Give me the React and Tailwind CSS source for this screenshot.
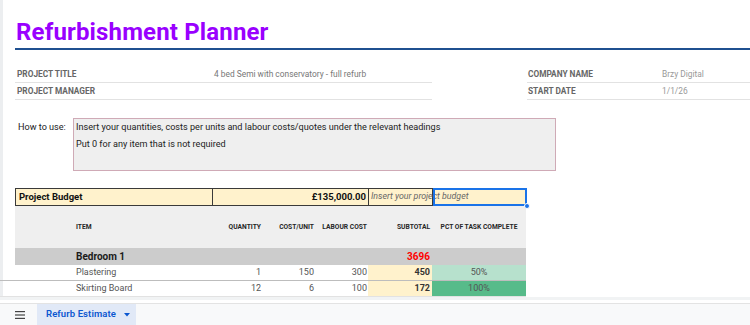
import React from "react";

const COLS = {
  A: "w-[58px]",
  B: "w-[139px]",
  C: "w-[51px]",
  D: "w-[53px]",
  E: "w-[52px]",
  F: "w-[64px]",
  G: "w-[94px]",
};

function InfoRows() {
  const left = [
    ["PROJECT TITLE", "4 bed Semi with conservatory - full refurb"],
    ["PROJECT MANAGER", ""],
  ];
  const right = [
    ["COMPANY NAME", "Brzy Digital"],
    ["START DATE", "1/1/26"],
  ];
  return (
    <div className="flex flex-col mt-[16px]">
      {left.map((l, i) => (
        <div key={i} className="flex h-[17px]">
          <div className="ml-[15px] w-[417px] flex items-center border-b border-[#e2e2e2] pt-[1px]">
            <div className="w-[199px] pl-[2px] text-[8.3px] font-bold text-[#666]">{l[0]}</div>
            <div className="text-[8.4px] text-[#777]">{l[1]}</div>
          </div>
          <div className="ml-[95px] flex-1 flex items-center border-b border-[#e2e2e2] pt-[1px]">
            <div className="w-[135px] pl-[1px] text-[8.3px] font-bold text-[#666]">{right[i][0]}</div>
            <div className="text-[8.4px] text-[#999]">{right[i][1]}</div>
          </div>
        </div>
      ))}
    </div>
  );
}

function HowTo() {
  return (
    <div className="flex mt-[18px] h-[53px]">
      <div className="w-[73px] pl-[18px] pt-[1px] leading-[17px] text-[9.1px] text-[#222]">How to use:</div>
      <div className="w-[483px] h-[53px] bg-[#efefef] border border-[#cfaab6] pl-[2px] text-[9.1px] leading-[17px] text-[#222]">
        <div>Insert your quantities, costs per units and labour costs/quotes under the relevant headings</div>
        <div>Put 0 for any item that is not required</div>
      </div>
    </div>
  );
}

function BudgetRow() {
  return (
    <div className="flex mt-[17px] h-[18px] pl-[15px]">
      <div className="flex h-[18px] bg-[#fff2cc]">
        <div className="flex h-[18px] border-y border-l border-[#3a3a3a]">
          <div className="w-[197px] border-r border-[#3a3a3a] flex items-center pl-[3px] text-[9.5px] font-bold text-[#111]">
            Project Budget
          </div>
          <div className="w-[156px] border-r border-[#3a3a3a] flex items-center justify-end pr-[2px] text-[9.5px] font-bold text-[#111]">
            £135,000.00
          </div>
          <div className="w-[64px] border-r border-[#3a3a3a] flex items-center pl-[2px] overflow-visible">
            <span className="relative z-0 whitespace-nowrap text-[8.8px] italic text-[#666]">Insert your project budget</span>
          </div>
        </div>
        <div className="relative w-[94px] h-[18px]">
          <div className="absolute inset-0 border-2 border-[#1a73e8] z-10" />
          <div className="absolute right-[-3px] bottom-[-3px] w-[6px] h-[6px] rounded-full bg-[#1a73e8] border border-white z-20" />
        </div>
      </div>
    </div>
  );
}

function HeaderRow() {
  const h = "text-[6.7px] font-bold text-[#262626] flex items-center whitespace-nowrap";
  return (
    <div className="flex pl-[15px]">
      <div className="flex h-[42px] bg-[#efefef]">
        <div className={COLS.A} />
        <div className={`${COLS.B} ${h} pl-[3px]`}>ITEM</div>
        <div className={`${COLS.C} ${h} justify-end pr-[2px]`}>QUANTITY</div>
        <div className={`${COLS.D} ${h} justify-end pr-[2px]`}>COST/UNIT</div>
        <div className={`${COLS.E} ${h} justify-end pr-[1px]`}>LABOUR COST</div>
        <div className={`${COLS.F} ${h} justify-end pr-[2px]`}>SUBTOTAL</div>
        <div className={`${COLS.G} ${h} justify-center`}>PCT OF TASK COMPLETE</div>
      </div>
    </div>
  );
}

function SectionRow() {
  return (
    <div className="flex pl-[15px]">
      <div className="flex h-[17px] bg-[#cccccc]">
        <div className={COLS.A} />
        <div className={`${COLS.B} flex items-center pl-[3px] text-[10px] font-bold text-[#1a1a1a]`}>Bedroom 1</div>
        <div className={COLS.C} />
        <div className={COLS.D} />
        <div className={COLS.E} />
        <div className={`${COLS.F} flex items-center justify-end pr-[2px] text-[10px] font-bold text-[#ff0000]`}>3696</div>
        <div className={COLS.G} />
      </div>
    </div>
  );
}

function ItemRow({ name, qty, cost, labour, sub, pct, pctBg, border }) {
  const n = "flex items-center justify-end text-[9px] text-[#555]";
  return (
    <div className={`flex h-[17px] w-[526px] pl-[15px] ${border}`}>
      <div className={COLS.A} />
      <div className={`${COLS.B} flex items-center pl-[3px] text-[9px] text-[#555]`}>{name}</div>
      <div className={`${COLS.C} ${n} pr-[2px]`}>{qty}</div>
      <div className={`${COLS.D} ${n} pr-[2px]`}>{cost}</div>
      <div className={`${COLS.E} ${n} pr-[1px]`}>{labour}</div>
      <div className={`${COLS.F} bg-[#fff2cc] flex items-center justify-end pr-[2px] text-[9px] font-bold text-[#333]`}>{sub}</div>
      <div className={`${COLS.G} ${pctBg} flex items-center justify-center text-[9px] text-[#555]`}>{pct}</div>
    </div>
  );
}

export default function App() {
  return (
    <div className="w-[750px] h-[325px] overflow-hidden bg-white flex flex-col font-['Roboto','Liberation_Sans',sans-serif]">
      <div className="flex flex-col h-[297px] bg-[linear-gradient(to_right,#eceef0_3px,#ffffff_3px)]">
        <div className="h-[43px] pt-[21px] pl-[16px]">
          <div className="text-[24px] leading-[22px] font-bold text-[#9900ff] tracking-[0.15px]">Refurbishment Planner</div>
        </div>
        <div className="ml-[15px] mt-[5px] h-[2px] bg-[#1f5090]" />
        <InfoRows />
        <HowTo />
        <BudgetRow />
        <HeaderRow />
        <SectionRow />
        <ItemRow name="Plastering" qty="1" cost="150" labour="300" sub="450" pct="50%" pctBg="bg-[#b7e1cd]" border="border-b border-[#bdbdbd]" />
        <ItemRow name="Skirting Board" qty="12" cost="6" labour="100" sub="172" pct="100%" pctBg="bg-[#57bb8a]" border="border-b border-[#e2e2e2]" />
      </div>
      <div className="h-[3px] bg-[#f1f3f4]" />
      <div className="h-[3px] bg-white" />
      <div className="flex items-stretch h-[22px] bg-[#f8f9fa] border-t border-[#e3e3e3]">
        <div className="w-[37px] flex items-center pl-[15px]">
          <svg width="10" height="8" viewBox="0 0 10 8">
            <rect x="0" y="0" width="10" height="1.2" fill="#444" />
            <rect x="0" y="3.4" width="10" height="1.2" fill="#444" />
            <rect x="0" y="6.8" width="10" height="1.2" fill="#444" />
          </svg>
        </div>
        <div className="w-[99px] bg-[#e1e9f7] flex items-center pl-[9px] gap-[8px] whitespace-nowrap">
          <span className="text-[9.5px] font-semibold text-[#0b57d0] tracking-[0.1px]">Refurb Estimate</span>
          <svg width="6" height="4" viewBox="0 0 6 4">
            <path d="M0 0 L6 0 L3 3.5 Z" fill="#0b57d0" />
          </svg>
        </div>
      </div>
    </div>
  );
}
